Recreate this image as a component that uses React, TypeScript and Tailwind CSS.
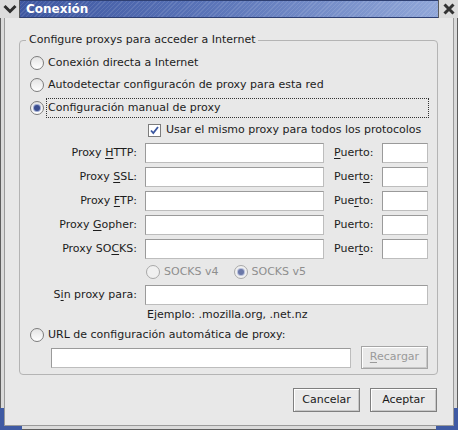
import React from "react";

function Radio({ checked = false, disabled = false }: { checked?: boolean; disabled?: boolean }) {
  return (
    <span
      className={
        "relative inline-flex h-[14px] w-[14px] shrink-0 items-center justify-center rounded-full border " +
        (disabled
          ? "border-[#a8a8a8] bg-[#f0f0f0]"
          : "border-[#7c7c7c] bg-[linear-gradient(180deg,#e4e4e4,#ffffff)]")
      }
    >
      {checked && (
        <span
          className={
            "h-[6px] w-[6px] rounded-full " +
            (disabled ? "bg-[#6b78a8] shadow-[0_0_0_1px_#b9c1dc]" : "bg-[#3a4d8f] shadow-[0_0_0_1px_#9fabd2]")
          }
        />
      )}
    </span>
  );
}

function Checkbox() {
  return (
    <span className="inline-flex h-[13px] w-[13px] shrink-0 items-center justify-center border border-[#7c7c7c] bg-white">
      <svg width="11" height="11" viewBox="0 0 11 11">
        <path d="M2 5.5 L4.3 8 L9 2" fill="none" stroke="#3b57a0" strokeWidth="1.8" />
      </svg>
    </span>
  );
}

function Input({ className = "" }: { className?: string }) {
  return (
    <div
      className={
        "h-[20px] border border-t-[#9a9a9a] border-l-[#9a9a9a] border-b-[#bdbdbd] border-r-[#bdbdbd] bg-white " +
        className
      }
    />
  );
}

function U({ children }: { children: React.ReactNode }) {
  return <span className="underline underline-offset-[2px]">{children}</span>;
}

function ProxyRow({ label, port }: { label: React.ReactNode; port: React.ReactNode }) {
  return (
    <div className="flex h-[20px] items-center">
      <div className="w-[117px] text-right">{label}</div>
      <Input className="ml-[8px] w-[179px]" />
      <div className="ml-[10px] w-[48px]">{port}</div>
      <Input className="w-[46px]" />
    </div>
  );
}

function Button({ children, disabled = false, className = "" }: { children: React.ReactNode; disabled?: boolean; className?: string }) {
  return (
    <div
      className={
        "flex items-center justify-center border border-[#7f7f7f] bg-[#e9e9e9] shadow-[inset_1px_1px_0_#ffffff,inset_-1px_-1px_0_#c8c8c8] " +
        (disabled ? "text-[#9a9a9a] border-[#a5a5a5] " : "text-[#1a1a1a] ") +
        className
      }
    >
      {children}
    </div>
  );
}

export default function App() {
  return (
    <div className="relative h-[430px] w-[458px] overflow-hidden bg-[#e8e8e8] font-['DejaVu_Sans',sans-serif] text-[11px] text-[#1c1c1c]">
      {/* Title bar */}
      <div className="flex h-[18px] bg-[#dcdcdc]">
        <div className="flex w-[20px] items-center justify-center border-r border-[#5a5a5a]">
          <svg width="14" height="10" viewBox="0 0 14 10">
            <path d="M1.5 2 L7 7.5 L12.5 2" fill="none" stroke="#2d2d2d" strokeWidth="3" />
          </svg>
        </div>
        <div className="flex flex-1 items-center border-y border-[#2e3f72] bg-[image:repeating-linear-gradient(135deg,rgba(255,255,255,0.10)_0px,rgba(255,255,255,0.10)_1px,transparent_1px,transparent_3px),linear-gradient(90deg,#3d56a0,#5a74b8_45%,#90a6d8)] pl-[6px] text-[12px] font-bold text-white">
          Conexión
        </div>
        <div className="flex w-[20px] items-center justify-center border-l border-[#5a5a5a]">
          <svg width="12" height="12" viewBox="0 0 12 12">
            <path d="M1.5 1.5 L10.5 10.5 M10.5 1.5 L1.5 10.5" fill="none" stroke="#333333" strokeWidth="3" />
          </svg>
        </div>
      </div>

      {/* Frame + body */}
      <div className="h-[412px] border-x border-b border-[#5e5e5e] bg-[#dadada] px-[3px] pb-[3px]">
        <div className="flex h-[408px] flex-col border-x border-b border-[#9a9a9a] bg-[#e8e8e8] pl-[14px] pr-[15px]">
          {/* group box */}
          <div className="relative mt-[22px] flex flex-col rounded-[4px] border border-[#b4b4b4] pb-[5px] pl-[10px] pr-[8px] pt-[12px]">
            <span className="absolute left-[6px] top-[-9px] bg-[#e8e8e8] px-[3px] leading-[16px]">
              Configure proxys para acceder a Internet
            </span>
            <div className="flex h-[20px] items-center gap-[4px]">
              <Radio />
              <span>Conexión directa a Internet</span>
            </div>
            <div className="mt-[2px] flex h-[20px] items-center gap-[4px]">
              <Radio />
              <span>Autodetectar configuracón de proxy para esta red</span>
            </div>
            <div className="mt-[3px] flex h-[20px] items-center gap-[2px]">
              <Radio checked />
              <span className="flex h-[20px] flex-1 items-center border border-dotted border-[#333] pl-[1px]">
                Configuración manual de proxy
              </span>
            </div>
            <div className="mt-[2px] flex h-[20px] items-center gap-[5px] pl-[118px]">
              <Checkbox />
              <span>Usar el mismo proxy para todos los protocolos</span>
            </div>
            <div className="ml-[-10px] mt-[3px] flex flex-col gap-[4px]">
              <ProxyRow label={<>Proxy <U>H</U>TTP:</>} port={<><U>P</U>uerto:</>} />
              <ProxyRow label={<>Proxy <U>S</U>SL:</>} port={<>Puert<U>o</U>:</>} />
              <ProxyRow label={<>Proxy <U>F</U>TP:</>} port={<>Pue<U>r</U>to:</>} />
              <ProxyRow label={<>Proxy <U>G</U>opher:</>} port={<>Puerto:</>} />
              <ProxyRow label={<>Proxy SO<U>C</U>KS:</>} port={<>Puer<U>t</U>o:</>} />
            </div>
            <div className="mt-[3px] flex h-[20px] items-center pl-[116px] text-[#8e8e8e]">
              <Radio disabled />
              <span className="ml-[4px]">SOCKS v4</span>
              <span className="ml-[15px]">
                <Radio checked disabled />
              </span>
              <span className="ml-[4px]">SOCKS v5</span>
            </div>
            <div className="ml-[-10px] mt-[3px] flex h-[20px] items-center">
              <div className="w-[117px] text-right">
                S<U>i</U>n proxy para:
              </div>
              <Input className="ml-[8px] w-[283px]" />
            </div>
            <div className="mt-[2px] flex h-[16px] items-center pl-[117px]">Ejemplo: .mozilla.org, .net.nz</div>
            <div className="mt-[2px] flex h-[20px] items-center gap-[4px]">
              <Radio />
              <span>URL de configuración automática de proxy:</span>
            </div>
            <div className="mt-[1px] flex h-[23px] items-center pl-[21px]">
              <Input className="w-[300px]" />
              <Button disabled className="ml-[10px] h-[23px] w-[67px]">
                <span>
                  <U>R</U>ecargar
                </span>
              </Button>
            </div>
          </div>

          {/* bottom buttons */}
          <div className="mt-[13px] flex justify-end gap-[10px] pr-[1px]">
            <Button className="h-[24px] w-[67px]">Cancelar</Button>
            <Button className="h-[24px] w-[67px]">Aceptar</Button>
          </div>
        </div>
      </div>

      {/* blue frame corner accents */}
      <div className="absolute bottom-0 left-0 h-[4px] w-[22px] bg-[#3f5aa3]" />
      <div className="absolute bottom-0 left-0 h-[22px] w-[4px] bg-[#3f5aa3]" />
      <div className="absolute bottom-0 right-0 h-[4px] w-[22px] bg-[#3f5aa3]" />
      <div className="absolute bottom-0 right-0 h-[22px] w-[4px] bg-[#3f5aa3]" />
    </div>
  );
}
